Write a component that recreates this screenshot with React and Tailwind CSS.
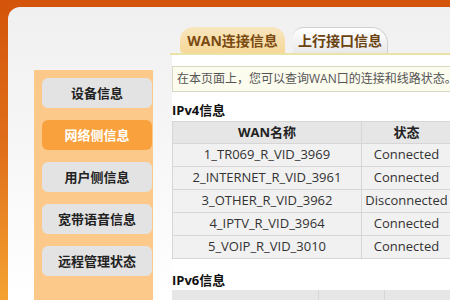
const NAV = ['设备信息', '网络侧信息', '用户侧信息', '宽带语音信息', '远程管理状态']

const ROWS = [
  ['1_TR069_R_VID_3969', 'Connected'],
  ['2_INTERNET_R_VID_3961', 'Connected'],
  ['3_OTHER_R_VID_3962', 'Disconnected'],
  ['4_IPTV_R_VID_3964', 'Connected'],
  ['5_VOIP_R_VID_3010', 'Connected'],
]

const font = { fontFamily: '"Open Sans", "Noto Sans CJK SC", sans-serif' }

export default function App() {
  return (
    <div className="w-[450px] h-[300px] overflow-hidden bg-gradient-to-b from-[#d3540a] via-[#e0701a] to-[#f4a232] pt-[7px] pl-[8px]" style={font}>
      <div className="h-full rounded-tl-[12px] bg-gradient-to-b from-[#f0f0f0] via-[#f7f7f7] to-white flex flex-col">
        {/* tabs */}
        <div className="h-[48px] pl-[162px] pt-[20px] flex flex-col">
          <div className="flex items-end h-[26px] pl-[10px] gap-[8px]">
            <div className="w-[105px] h-[26px] rounded-t-[13px] rounded-bl-[4px] bg-gradient-to-b from-[#f8e6bf] to-[#f6d898] flex items-center justify-center text-[14px] font-bold text-[#7b4a12] -skew-x-[8px]">
              <span className="skew-x-[8px]">WAN连接信息</span>
            </div>
            <div className="w-[95px] h-[26px] rounded-tl-[10px] rounded-tr-[16px] bg-gradient-to-b from-white to-[#e9e9e9] border-r border-t border-[#d0d0d0] flex items-center justify-center text-[14px] font-bold text-[#6b4210]">
              上行接口信息
            </div>
          </div>
          <div className="h-[2px] bg-[#ebe2a6]" />
        </div>

        <div className="flex flex-1 min-h-0">
          {/* sidebar */}
          <div className="ml-[26px] mt-[15px] w-[119px] bg-[#fdc98b] pl-[8px] pr-[1px] pt-[8px] flex flex-col gap-[12px]">
            {NAV.map((n, i) => (
              <div key={n}
                className={'h-[30px] rounded-[6px] flex items-center justify-center pt-[2px] text-[13px] font-bold ' +
                  (i === 1 ? 'bg-[#f9a23d] text-white' : 'bg-[#e3e3e3] text-[#222]')}>
                {n}
              </div>
            ))}
          </div>

          {/* content */}
          <div className="ml-[19px] flex-1 min-w-0 bg-white pt-[11px] overflow-hidden">
            <div className="w-[320px] h-[26px] border border-[#d8d8c2] bg-[#fbfbee] pl-[4px] flex items-center text-[12px] text-[#555] whitespace-nowrap overflow-hidden">
              在本页面上，您可以查询WAN口的连接和线路状态。
            </div>
            <div className="mt-[8px] h-[21px] flex items-center pt-[1px] text-[13px] font-bold text-[#111]">IPv4信息</div>
            <table className="border-collapse text-[13px] text-[#333] table-fixed w-[330px]">
              <colgroup>
                <col className="w-[189px]" />
                <col className="w-[90px]" />
                <col className="w-[51px]" />
              </colgroup>
              <thead>
                <tr className="h-[22px] bg-[#e6e6e6]">
                  <th className="border border-[#d6d6d6] font-bold text-[#222]">WAN名称</th>
                  <th className="border border-[#d6d6d6] font-bold text-[#222]">状态</th>
                  <th className="border border-[#d6d6d6]"></th>
                </tr>
              </thead>
              <tbody>
                {ROWS.map(([name, st]) => (
                  <tr key={name} className="h-[23px] bg-[#f1f1f1]">
                    <td className="border border-[#d6d6d6] text-center whitespace-nowrap">{name}</td>
                    <td className="border border-[#d6d6d6] text-center whitespace-nowrap overflow-hidden">{st}</td>
                    <td className="border border-[#d6d6d6]"></td>
                  </tr>
                ))}
              </tbody>
            </table>
            <div className="mt-[13px] h-[18px] flex items-center text-[13px] font-bold text-[#111]">IPv6信息</div>
            <div className="flex h-[22px] bg-[#e6e6e6] w-[330px]">
              <div className="w-[147px] border-r border-[#d6d6d6]" />
              <div className="w-[66px] border-r border-[#d6d6d6]" />
            </div>
          </div>
        </div>
      </div>
    </div>
  )
}
